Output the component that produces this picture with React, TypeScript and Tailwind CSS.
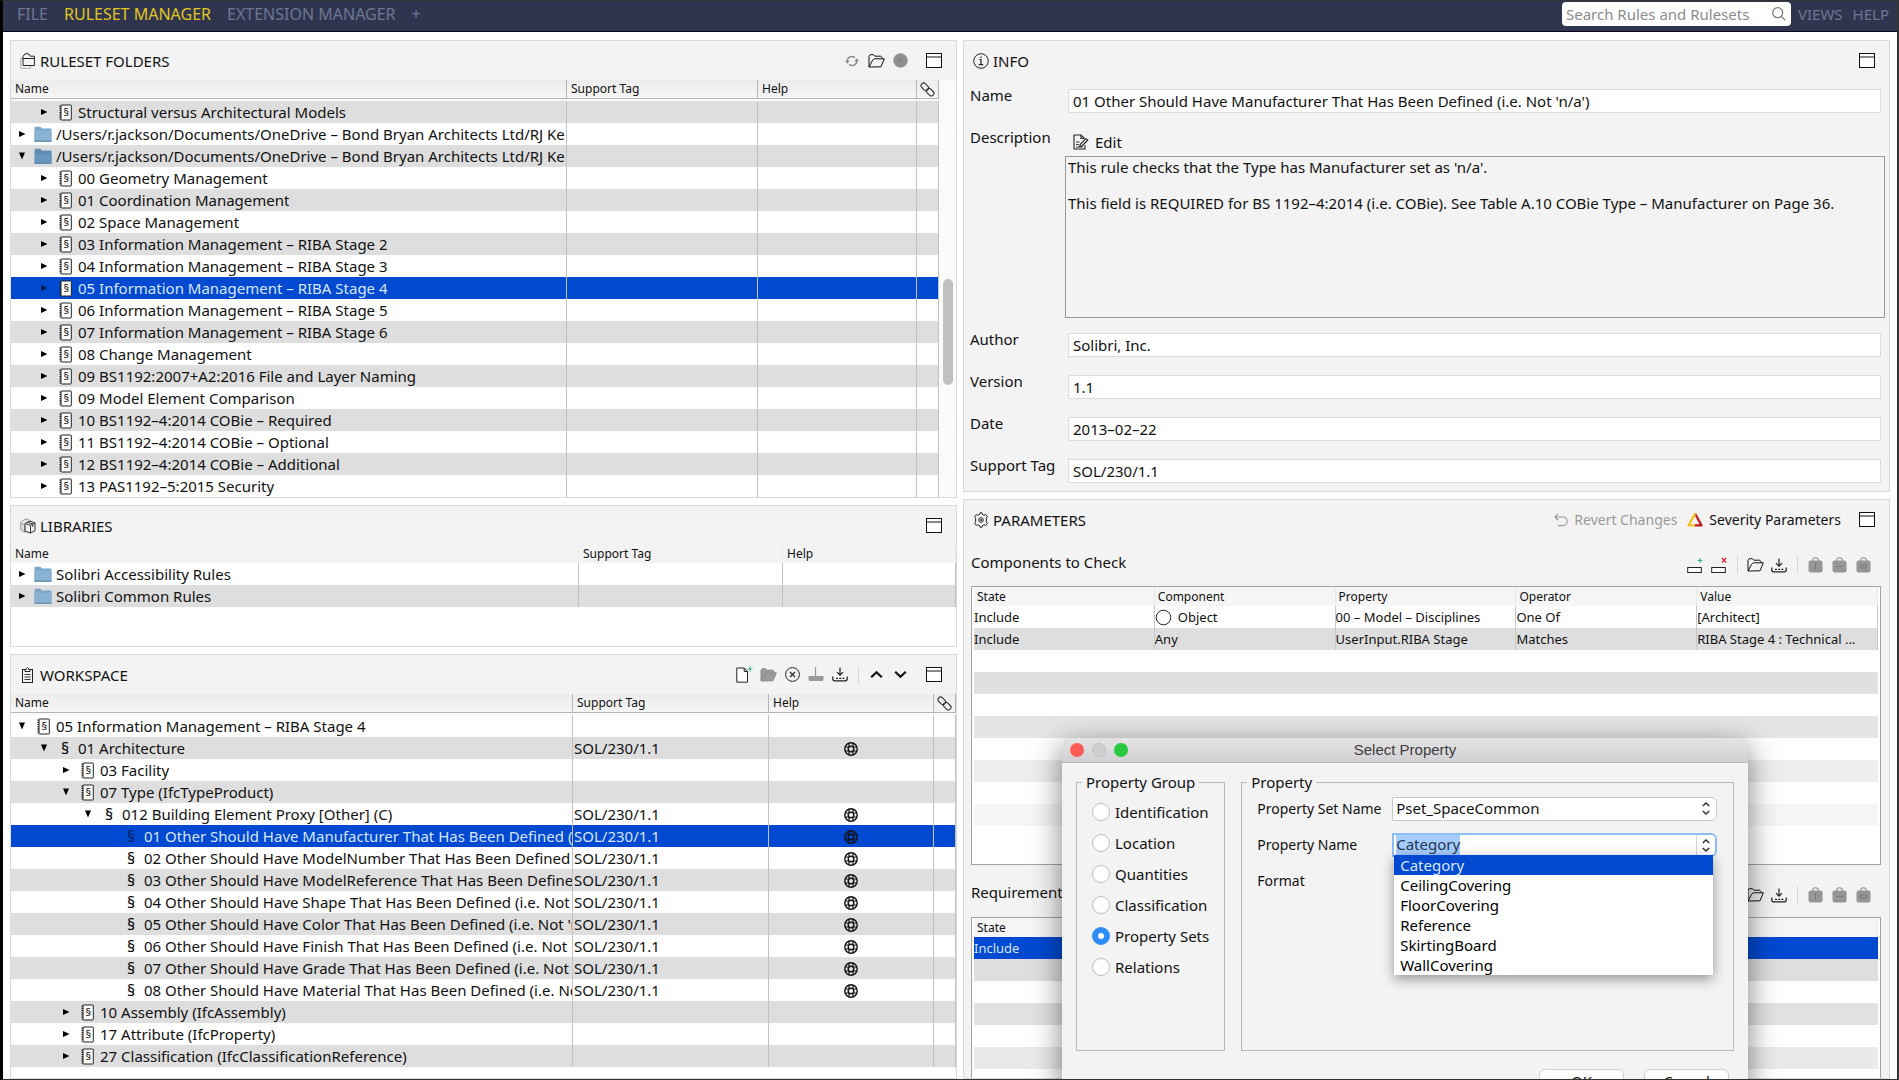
import { useEffect, useRef, useState } from "react";
import type { ReactNode } from "react";

type TreeRow = {
  level: number;
  label: string;
  icon: "ruleset" | "rule" | "folder" | "folderOpen";
  open?: boolean;
  tag?: string;
  selected?: boolean;
};

const USER_PATH = "/Users/r.jackson/Documents/OneDrive – Bond Bryan Architects Ltd/RJ Ke";

const folderRows: TreeRow[] = [
  { level: 1, label: "Structural versus Architectural Models", icon: "ruleset", open: false },
  { level: 0, label: USER_PATH, icon: "folder", open: false },
  { level: 0, label: USER_PATH, icon: "folderOpen", open: true },
  { level: 1, label: "00 Geometry Management", icon: "ruleset", open: false },
  { level: 1, label: "01 Coordination Management", icon: "ruleset", open: false },
  { level: 1, label: "02 Space Management", icon: "ruleset", open: false },
  { level: 1, label: "03 Information Management – RIBA Stage 2", icon: "ruleset", open: false },
  { level: 1, label: "04 Information Management – RIBA Stage 3", icon: "ruleset", open: false },
  { level: 1, label: "05 Information Management – RIBA Stage 4", icon: "ruleset", open: false, selected: true },
  { level: 1, label: "06 Information Management – RIBA Stage 5", icon: "ruleset", open: false },
  { level: 1, label: "07 Information Management – RIBA Stage 6", icon: "ruleset", open: false },
  { level: 1, label: "08 Change Management", icon: "ruleset", open: false },
  { level: 1, label: "09 BS1192:2007+A2:2016 File and Layer Naming", icon: "ruleset", open: false },
  { level: 1, label: "09 Model Element Comparison", icon: "ruleset", open: false },
  { level: 1, label: "10 BS1192–4:2014 COBie – Required", icon: "ruleset", open: false },
  { level: 1, label: "11 BS1192–4:2014 COBie – Optional", icon: "ruleset", open: false },
  { level: 1, label: "12 BS1192–4:2014 COBie – Additional", icon: "ruleset", open: false },
  { level: 1, label: "13 PAS1192–5:2015 Security", icon: "ruleset", open: false },
];

const libraryRows: TreeRow[] = [
  { level: 0, label: "Solibri Accessibility Rules", icon: "folder", open: false },
  { level: 0, label: "Solibri Common Rules", icon: "folder", open: false },
];

const TAG = "SOL/230/1.1";

const workspaceRows: TreeRow[] = [
  { level: 0, label: "05 Information Management – RIBA Stage 4", icon: "ruleset", open: true },
  { level: 1, label: "01 Architecture", icon: "rule", open: true, tag: TAG },
  { level: 2, label: "03 Facility", icon: "ruleset", open: false },
  { level: 2, label: "07 Type (IfcTypeProduct)", icon: "ruleset", open: true },
  { level: 3, label: "012 Building Element Proxy [Other] (C)", icon: "rule", open: true, tag: TAG },
  { level: 4, label: "01 Other Should Have Manufacturer That Has Been Defined (i.e", icon: "rule", tag: TAG, selected: true },
  { level: 4, label: "02 Other Should Have ModelNumber That Has Been Defined (i", icon: "rule", tag: TAG },
  { level: 4, label: "03 Other Should Have ModelReference That Has Been Defined", icon: "rule", tag: TAG },
  { level: 4, label: "04 Other Should Have Shape That Has Been Defined (i.e. Not 'n", icon: "rule", tag: TAG },
  { level: 4, label: "05 Other Should Have Color That Has Been Defined (i.e. Not 'n", icon: "rule", tag: TAG },
  { level: 4, label: "06 Other Should Have Finish That Has Been Defined (i.e. Not 'n", icon: "rule", tag: TAG },
  { level: 4, label: "07 Other Should Have Grade That Has Been Defined (i.e. Not 'n", icon: "rule", tag: TAG },
  { level: 4, label: "08 Other Should Have Material That Has Been Defined (i.e. Not", icon: "rule", tag: TAG },
  { level: 2, label: "10 Assembly (IfcAssembly)", icon: "ruleset", open: false },
  { level: 2, label: "17 Attribute (IfcProperty)", icon: "ruleset", open: false },
  { level: 2, label: "27 Classification (IfcClassificationReference)", icon: "ruleset", open: false },
];

const indents = ["pl-0", "pl-[22px]", "pl-[44px]", "pl-[66px]", "pl-[88px]"];

const propertyGroups = ["Identification", "Location", "Quantities", "Classification", "Property Sets", "Relations"];
const propertyNames = ["Category", "CeilingCovering", "FloorCovering", "Reference", "SkirtingBoard", "WallCovering"];

/* ---------- icons ---------- */

function WindowIcon() {
  return (
    <svg width="16" height="15" viewBox="0 0 16 15" fill="#fff" stroke="#111">
      <rect x="0.5" y="0.5" width="15" height="14" />
      <path d="M0 4h16" />
    </svg>
  );
}

function FoldersIcon() {
  return (
    <svg width="15" height="16" viewBox="0 0 15 16" fill="none" stroke="#222">
      <path d="M3 5.5H.7v9.8h9.8V13" stroke="#aaa" />
      <path d="M3 12.5V3.3L5 .8h3.6l1.6 2.4h4.2v9.3z" fill="#f3f3f3" />
      <path d="M3 5.5h11.4" />
    </svg>
  );
}

function BoxesIcon() {
  return (
    <svg width="16" height="16" viewBox="0 0 16 16" fill="none" stroke="#333">
      <path d="M.7 4.5v7l4 2.8V7zM.7 4.5L5.5.8l4 1.5" fill="#ddd" stroke="#999" />
      <path d="M5 5.5l5-2.5 5 1.8v8L10.5 15 5 13.2z" fill="#f3f3f3" />
      <path d="M5 5.5l5.5 1.8L15 4.8M10.5 7.3V15M7.8 4.2l5 1.8v3" />
    </svg>
  );
}

function ClipboardIcon() {
  return (
    <svg width="14" height="16" viewBox="0 0 14 16" fill="none" stroke="#222">
      <rect x="1.5" y="2.5" width="10" height="13" />
      <path d="M4 2.5h1.2C5.3 0 7.7 0 7.8 2.5H9v2H4z" fill="#f3f3f3" />
      <path d="M3.5 7.5h6M3.5 10h6M3.5 12.5h6" strokeWidth="0.9" />
    </svg>
  );
}

function InfoIcon() {
  return (
    <svg width="16" height="16" viewBox="0 0 16 16" fill="none" stroke="#222">
      <circle cx="8" cy="8" r="7.3" />
      <path d="M6.3 6.5H8v5M5.8 11.6h4.4M8 3.5v1.4" strokeWidth="1.2" />
    </svg>
  );
}

function GearIcon() {
  return (
    <svg width="16" height="16" viewBox="0 0 16 16" fill="none" stroke="#222">
      <path d="M6.6 2.4L7 .8h2l.4 1.6 1.6.9 1.8-.8 1.6 2.1-1 1.6v3.6l1 1.6-1.6 2.1-1.8-.8-1.6.9L9 15.2H7l-.4-1.6-1.6-.9-1.8.8-1.6-2.1 1-1.6V6.2l-1-1.6 1.6-2.1L5 3.3z" />
      <circle cx="8" cy="8" r="2.3" />
      <circle cx="8" cy="8" r="0.6" fill="#222" />
    </svg>
  );
}

function RefreshIcon() {
  return (
    <svg width="14" height="14" viewBox="0 0 14 14" fill="none" stroke="#8a8a8a" strokeWidth="1.5">
      <path d="M2.2 8V7a4.6 4.6 0 0 1 7.6-3.4M11.8 6v1a4.6 4.6 0 0 1-7.6 3.4" />
      <path d="M0 6.8h4.6L2.3 9.8zM9.4 7.2H14L11.7 4.2z" fill="#8a8a8a" stroke="none" />
    </svg>
  );
}

function OpenFolderIcon({ dim }: { dim?: boolean }) {
  return (
    <svg width="17" height="14" viewBox="0 0 17 14" fill={dim ? "#9a9a9a" : "none"} stroke={dim ? "#8c8c8c" : "#111"} strokeLinejoin="round">
      <path d="M1 13V2.2L2.2.7h3.3l1.3 1.5h6L14 3.6v1.2" />
      <path d="M1 13L4.6 6.2 6.4 4.8h9.9L13 12.8z" />
    </svg>
  );
}

function DisabledCloseIcon() {
  return (
    <svg width="15" height="15" viewBox="0 0 15 15">
      <circle cx="7.5" cy="7.5" r="7.2" fill="#909090" />
      <path d="M5.5 5.5l4 4M9.5 5.5l-4 4" stroke="#7a7a7a" />
    </svg>
  );
}

function CloseCircleIcon() {
  return (
    <svg width="15" height="15" viewBox="0 0 15 15" fill="none" stroke="#222">
      <circle cx="7.5" cy="7.5" r="6.9" />
      <path d="M5 5l5 5M10 5l-5 5" strokeWidth="1.1" />
    </svg>
  );
}

function NewFileIcon() {
  return (
    <svg width="17" height="17" viewBox="0 0 17 17" fill="none" stroke="#222">
      <path d="M.8 2h7.4l3.3 3.5v10.7H.8z" fill="#fff" />
      <path d="M8.2 2v3.5h3.3" />
      <path d="M14 .5v5M11.5 3h5" stroke="#3fb57f" strokeWidth="1.2" />
    </svg>
  );
}

function SaveDimIcon() {
  return (
    <svg width="16" height="15" viewBox="0 0 16 15">
      <path d="M7.5 0v10" stroke="#999" strokeWidth="1.2" />
      <path d="M.5 9h15v3.5q0 1.5-1.5 1.5H2Q.5 14 .5 12.5z" fill="#999" />
    </svg>
  );
}

function SaveIcon() {
  return (
    <svg width="16" height="15" viewBox="0 0 16 15" fill="none" stroke="#222" strokeWidth="1.2">
      <path d="M8 .5v7.5M5 5.2L8 8.2l3-3M.8 9.5v3.2L2 13.8h12l1.2-1.1V9.5" />
      <path d="M4 11.3h8.5" strokeDasharray="2 1.2" />
    </svg>
  );
}

function ChevronIcon({ up }: { up?: boolean }) {
  return (
    <svg width="13" height="9" viewBox="0 0 13 9" fill="none" stroke="#111" strokeWidth="2.2">
      <path d={up ? "M1.2 7.2l5.3-5 5.3 5" : "M1.2 1.8l5.3 5 5.3-5"} />
    </svg>
  );
}

function LinkIcon() {
  return (
    <svg width="15" height="15" viewBox="0 0 15 15" fill="none" stroke="#333" strokeWidth="1.1">
      <rect x="-4.2" y="-2.6" width="8.4" height="5.2" rx="2.6" transform="translate(4.8 4.8) rotate(45)" />
      <rect x="-4.2" y="-2.6" width="8.4" height="5.2" rx="2.6" transform="translate(10.2 10.2) rotate(45)" />
    </svg>
  );
}

function BuoyIcon() {
  return (
    <svg width="14" height="14" viewBox="0 0 14 14" fill="none" stroke="#111" className="inline-block align-middle">
      <circle cx="7" cy="7" r="6.2" strokeWidth="1.4" />
      <circle cx="7" cy="7" r="2.8" strokeWidth="1.4" />
      <path d="M5 1v3.6M9 1v3.6M5 9.4V13M9 9.4V13M1 5h3.6M1 9h3.6M9.4 5H13M9.4 9H13" strokeWidth="1.2" />
    </svg>
  );
}

function AddRowIcon({ remove }: { remove?: boolean }) {
  return (
    <svg width="16" height="17" viewBox="0 0 16 17" fill="none" stroke="#222">
      <rect x="0.7" y="10.5" width="13.6" height="5" fill="#fff" />
      {remove ? (
        <path d="M11 1l4.2 4.4M15.2 1L11 5.4" stroke="#dd2b40" strokeWidth="1.4" />
      ) : (
        <path d="M13 1v5M10.5 3.5h5" stroke="#3fb57f" strokeWidth="1.2" />
      )}
    </svg>
  );
}

function BagIcon({ mark }: { mark: string }) {
  return (
    <svg width="15" height="16" viewBox="0 0 15 16" fill="none">
      <path d="M4.5 4.5Q4.5 .8 7.5 .8t3 3.7" stroke="#8d8d8d" strokeWidth="1.1" />
      <rect x="0.5" y="3.5" width="14" height="12" rx="2" fill="#969696" />
      <path d={mark} stroke="#787878" />
    </svg>
  );
}

function EditIcon() {
  return (
    <svg width="16" height="16" viewBox="0 0 16 16" fill="none" stroke="#222" strokeWidth="1.1">
      <path d="M12 11v4H1V1h7l3.5 3.5" />
      <path d="M8 1v3.5h3" />
      <path d="M14.8 6L9 12l-2.3.6.6-2.2L12.8 4.6z" fill="#f3f3f3" />
      <path d="M3 8h3.5M3 10.5h3M3 13h7" strokeWidth="0.9" />
    </svg>
  );
}

function RevertIcon() {
  return (
    <svg width="14" height="14" viewBox="0 0 14 14" fill="none" stroke="#9a9a9a" strokeWidth="1.2">
      <path d="M4 1L1 4l3 3M1 4h7.8a4.2 4.2 0 0 1 0 8.7H4" />
    </svg>
  );
}

function SeverityIcon() {
  return (
    <svg width="16" height="15" viewBox="0 0 16 15" fill="none" strokeWidth="2.2" strokeLinejoin="round">
      <path d="M8 13.4h6.5L8 1.5" stroke="#c8161d" />
      <path d="M8.4 1.5L1.5 13.4H8" stroke="#f0c419" />
    </svg>
  );
}

function FolderIcon({ open }: { open?: boolean }) {
  return (
    <svg width="18" height="16" viewBox="0 0 18 16">
      <path d="M.5 2Q.5 .8 1.6 .8h4.6L8 2.6h8.3q1.2 0 1.2 1.2v10.7q0 1-1 1h-15q-1 0-1-1z" fill={open ? "#5f8fb5" : "#7aa6c8"} />
      <path d={open ? "M1 6.5h16.5v8.8h-17z" : "M.5 4.5h17v10.8H.5z"} fill={open ? "#6797bf" : "#8ab3d3"} />
      <path d="M.5 15.2h17" stroke="#55819f" />
    </svg>
  );
}

function RulesetIcon() {
  return (
    <svg width="13" height="17" viewBox="0 0 13 17">
      <rect x="2" y="1" width="10.3" height="15" rx="0.6" fill="#fff" stroke="#222" />
      <path d="M1.3 1.5v14" stroke="#222" strokeWidth="1.6" strokeDasharray="1.2 1" />
      <text x="7.3" y="12" fontSize="11" textAnchor="middle" fill="#111">§</text>
    </svg>
  );
}

function RowIcon({ row }: { row: TreeRow }) {
  if (row.icon === "ruleset") return <RulesetIcon />;
  if (row.icon === "rule") return <span className={`text-base leading-none ${row.selected ? "text-[#10206a]" : "text-black"}`}>§</span>;
  return <FolderIcon open={row.icon === "folderOpen"} />;
}

function Arrow({ open, selected }: { open?: boolean; selected?: boolean }) {
  if (open === undefined) return null;
  return (
    <svg width="8" height="8" viewBox="0 0 8 8" fill={selected ? "#0a1a4a" : "#000"}>
      <path d={open ? "M1 .5h6L4 7.5z" : "M1 1v6l6.5-3z"} />
    </svg>
  );
}

/* ---------- building blocks ---------- */

function ToolButton({ label, children }: { label: string; children: ReactNode }) {
  return (
    <button type="button" aria-label={label} className="flex w-6 h-6 items-center justify-center">
      {children}
    </button>
  );
}

function Divider() {
  return <span className="w-px h-[18px] bg-[#d8d8d8]" />;
}

function Panel({ icon, title, tools, className, children }: { icon: ReactNode; title: string; tools?: ReactNode; className?: string; children: ReactNode }) {
  return (
    <section className={`flex flex-col min-h-0 overflow-hidden border border-[#d9d9d9] bg-[#f3f3f3] ${className ?? ""}`}>
      <header className="flex h-[39px] shrink-0 items-center pl-2 pr-2.5">
        <span className="flex w-[17px] justify-center">{icon}</span>
        <h2 className="flex-1 pl-1">{title}</h2>
        <div className="flex items-center text-sm">{tools}</div>
        <div className="pl-2.5">
          <ToolButton label={`Maximize ${title}`}>
            <WindowIcon />
          </ToolButton>
        </div>
      </header>
      {children}
    </section>
  );
}

function TreeTable({ rows, cols, link, flatHead }: { rows: TreeRow[]; cols: string[]; link?: boolean; flatHead?: boolean }) {
  const [stripe, tagCol, helpCol] = cols;
  const th = flatHead ? "h-[18px] border-r border-[#ebebeb]" : "h-[19px] border-r border-b border-[#b5b5b5] bg-linear-to-b from-[#ececec] to-[#f6f6f6]";
  const td = "border-r border-[#c2c2c2] p-0";
  return (
    <table className="w-full table-fixed border-separate border-spacing-0">
      <colgroup>
        <col />
        <col className={tagCol} />
        <col className={helpCol} />
        {link && <col className="w-[22px]" />}
      </colgroup>
      <thead>
        <tr className={flatHead ? "h-[18px]" : "h-[21px] bg-[#fafafa]"}>
          {["Name", "Support Tag", "Help"].map((name) => (
            <th key={name} scope="col" className="p-0 align-top text-left text-xs font-normal">
              <div className={`flex items-center pl-1 ${th}`}>{name}</div>
            </th>
          ))}
          {link && (
            <th scope="col" aria-label="Links" className="p-0 align-top">
              <div className={`flex items-center justify-center ${th}`}>
                <LinkIcon />
              </div>
            </th>
          )}
        </tr>
      </thead>
      <tbody>
        {rows.map((row, i) => {
          const grey = stripe === "grey" ? i % 2 === 0 : i % 2 === 1;
          const bg = row.selected ? "bg-[#0049d0] text-[#d7e6ff]" : grey ? "bg-[#dedede]" : "bg-white";
          return (
            <tr key={i} className={`h-[22px] ${bg}`}>
              <td className={td}>
                <div className={`flex h-[22px] items-center overflow-hidden whitespace-nowrap ${indents[row.level]}`}>
                  <span className="flex w-[22px] shrink-0 justify-center"><Arrow open={row.open} selected={row.selected} /></span>
                  <span className="flex w-5 shrink-0 justify-center"><RowIcon row={row} /></span>
                  <span className="min-w-0 overflow-hidden pl-[3px] leading-[22px]">{row.label}</span>
                </div>
              </td>
              <td className={td}>{row.tag && <span className="pl-px">{row.tag}</span>}</td>
              <td className={`text-center leading-none ${td}`}>{row.tag && <BuoyIcon />}</td>
              {link && <td className={td} />}
            </tr>
          );
        })}
      </tbody>
    </table>
  );
}

function Field({ id, label, value }: { id: string; label: string; value: string }) {
  return (
    <div className="flex h-[42px]">
      <label htmlFor={id} className="w-[98px] shrink-0">{label}</label>
      <input id={id} defaultValue={value} className="mt-[3px] h-6 min-w-0 flex-1 border border-[#dcdcdc] bg-white px-1 outline-none" />
    </div>
  );
}

function ConditionTools() {
  return (
    <div className="flex items-center self-start">
      <ToolButton label="Add row"><AddRowIcon /></ToolButton>
      <ToolButton label="Remove row"><AddRowIcon remove /></ToolButton>
      <span className="flex w-3 justify-center"><Divider /></span>
      <ToolButton label="Open"><OpenFolderIcon /></ToolButton>
      <ToolButton label="Save"><SaveIcon /></ToolButton>
      <span className="flex w-3 justify-center"><Divider /></span>
      <ToolButton label="Set bag"><BagIcon mark="M7.5 6v7" /></ToolButton>
      <ToolButton label="Add to bag"><BagIcon mark="M4.5 9.5h6" /></ToolButton>
      <ToolButton label="Remove from bag"><BagIcon mark="M4.5 8h6v3h-6z" /></ToolButton>
    </div>
  );
}

function ConditionTable({ rows, fillers, selected }: { rows: ReactNode[][]; fillers: string[]; selected?: boolean }) {
  return (
    <div className="border border-[#a3a3a3] bg-white px-0.5 pb-4">
      <table className="w-full table-fixed border-separate border-spacing-0">
        <thead>
          <tr className="h-[19px] bg-[#f5f5f5]">
            {["State", "Component", "Property", "Operator", "Value"].map((name) => (
              <th key={name} scope="col" className="border-r border-[#e8e8e8] p-0 pl-[3px] text-left text-xs leading-[18px] font-normal">{name}</th>
            ))}
          </tr>
        </thead>
        <tbody>
          {rows.map((cells, i) => (
            <tr key={i} className={`h-[22px] ${selected ? "bg-[#0049d0] text-[#d7e6ff]" : i % 2 ? "bg-[#dedede]" : "bg-white"}`}>
              {cells.map((cell, j) => (
                <td key={j} className={`truncate p-0 text-[13px] leading-[22px] ${selected ? "" : "border-r border-[#c8c8c8]"}`}>{cell}</td>
              ))}
            </tr>
          ))}
          {fillers.map((bg, i) => (
            <tr key={i} className={`h-[22px] ${bg}`}>
              <td colSpan={5} className="p-0" />
            </tr>
          ))}
        </tbody>
      </table>
    </div>
  );
}

function StepperArrows() {
  return (
    <svg width="8" height="13" viewBox="0 0 8 13" fill="none" stroke="#333" strokeWidth="1.5">
      <path d="M.8 4L4 1l3.2 3M.8 9L4 12l3.2-3" />
    </svg>
  );
}

function SelectPropertyDialog() {
  const [group, setGroup] = useState("Property Sets");
  const nameRef = useRef<HTMLInputElement>(null);

  useEffect(() => {
    nameRef.current?.focus({ preventScroll: true });
    nameRef.current?.select();
  }, []);

  return (
    <div role="dialog" aria-labelledby="dialog-title" className="absolute top-[737px] left-[1059px] w-[686px] rounded-t-md bg-[#f3f3f3] shadow-[0_8px_30px_rgba(0,0,0,0.5)]">
      <div className="flex h-[25px] items-center rounded-t-md border-b border-[#b9b7b9] bg-linear-to-b from-[#e6e3e6] to-[#d3d0d3] px-2">
        <div className="flex w-16 gap-2">
          <button type="button" aria-label="Close" className="size-3.5 rounded-full bg-[#fb5b57]" />
          <button type="button" aria-label="Minimize" disabled className="size-3.5 rounded-full border border-[#c4c1c4] bg-[#d0cdd0]" />
          <button type="button" aria-label="Zoom" className="size-3.5 rounded-full bg-[#28c840]" />
        </div>
        <h2 id="dialog-title" className="flex-1 pr-16 text-center font-['Liberation_Sans',sans-serif] text-[15px] text-[#3d3d3d]">Select Property</h2>
      </div>

      <div className="flex gap-4 px-3.5 pt-2.5">
        <fieldset className="h-[278px] w-[147px] border border-[#b9b9b9] px-[15px]">
          <legend className="-ml-2.5 px-1">Property Group</legend>
          <div className="flex flex-col pt-[5px]">
            {propertyGroups.map((name) => (
              <label key={name} className="flex h-[31px] items-center gap-[5px] whitespace-nowrap">
                <input
                  type="radio"
                  name="property-group"
                  checked={group === name}
                  onChange={() => setGroup(name)}
                  className="size-[18px] shrink-0 appearance-none rounded-full border border-[#bdbdbd] bg-white checked:border-[6px] checked:border-[#2f8dfa]"
                />
                {name}
              </label>
            ))}
          </div>
        </fieldset>

        <fieldset className="h-[278px] min-w-0 flex-1 border border-[#b9b9b9] pr-4 pl-[15px]">
          <legend className="-ml-2.5 px-1">Property</legend>
          <div className="flex h-9 items-center text-sm">
            <label htmlFor="pset" className="w-[135px] shrink-0">Property Set Name</label>
            <div className="relative flex-1">
              <select id="pset" className="h-6 w-full appearance-none rounded-r-md border border-[#c9c9c9] bg-white pl-[3px] text-[15px] outline-none">
                <option>Pset_SpaceCommon</option>
              </select>
              <span className="pointer-events-none absolute top-[5px] right-[7px]"><StepperArrows /></span>
            </div>
          </div>
          <div className="flex h-9 items-center text-sm">
            <label htmlFor="pname" className="w-[135px] shrink-0">Property Name</label>
            <div className="relative flex h-6 flex-1 items-center rounded-r-md border-2 border-[#8dbdf3] bg-white text-[15px]">
              <input
                id="pname"
                ref={nameRef}
                defaultValue="Category"
                className="h-5 min-w-0 flex-1 bg-transparent pl-0.5 outline-none selection:bg-[#a5cdff] selection:text-[#26364f]"
              />
              <button type="button" aria-label="Show property names" className="flex h-5 w-[19px] items-center justify-center border-l border-[#d5d5d5]">
                <StepperArrows />
              </button>
              <ul role="listbox" aria-label="Property names" className="absolute top-5 right-0.5 left-0 z-10 bg-white shadow-[0_4px_12px_rgba(0,0,0,0.4)]">
                {propertyNames.map((name, i) => (
                  <li key={name} role="option" aria-selected={i === 0} className={`h-5 pl-1.5 leading-5 ${i === 0 ? "bg-[#0049d0] text-[#d7e6ff]" : "text-black"}`}>
                    {name}
                  </li>
                ))}
              </ul>
            </div>
          </div>
          <div className="flex h-9 items-center text-sm">
            <span className="w-[135px] shrink-0">Format</span>
          </div>
        </fieldset>
      </div>

      <div className="flex justify-end gap-5 pt-[18px] pr-[19px]">
        <button type="button" className="h-6 w-[85px] rounded-md border border-[#cfcfcf] bg-white">OK</button>
        <button type="button" className="h-6 w-[85px] rounded-md border border-[#cfcfcf] bg-white">Cancel</button>
      </div>
    </div>
  );
}

/* ---------- page ---------- */

export default function App() {
  return (
    <div className="relative flex h-screen flex-col overflow-hidden border-t border-r-2 border-b border-l-[3px] border-t-[#333] border-r-[#333] border-b-[#333] border-l-black bg-white font-['Noto_Sans',sans-serif] text-[15px] leading-[18px] text-[#111]">
      <nav className="flex h-[31px] shrink-0 items-center border-b border-[#06061f] bg-[#30354f] pb-1 pl-3.5 pr-2 text-[#6b7793]">
        <div className="flex items-center gap-4 text-base leading-[18px]">
          <button type="button">FILE</button>
          <button type="button" className="text-[#e0c71f]">RULESET MANAGER</button>
          <button type="button">EXTENSION MANAGER</button>
          <button type="button" aria-label="Add tab">+</button>
        </div>
        <label className="mr-[7px] ml-auto flex h-6 w-[229px] items-center rounded bg-white px-1">
          <input type="search" aria-label="Search" placeholder="Search Rules and Rulesets" className="min-w-0 flex-1 bg-transparent outline-none placeholder:text-[#8b8b8b]" />
          <svg width="16" height="16" viewBox="0 0 16 16" fill="none" stroke="#777" strokeWidth="1.2">
            <circle cx="6.7" cy="6.7" r="5" />
            <path d="M10.3 10.3l4 4" />
          </svg>
        </label>
        <button type="button">VIEWS</button>
        <button type="button" className="ml-2.5">HELP</button>
      </nav>

      <main className="grid min-h-0 flex-1 grid-cols-[947fr_927fr] gap-1.5 px-[7px] pt-2">
        <div className="flex min-h-0 flex-col gap-[7px]">
          <Panel
            icon={<FoldersIcon />}
            title="RULESET FOLDERS"
            className="shrink-0"
            tools={
              <>
                <ToolButton label="Refresh"><RefreshIcon /></ToolButton>
                <ToolButton label="Open folder"><OpenFolderIcon /></ToolButton>
                <ToolButton label="Close folder"><DisabledCloseIcon /></ToolButton>
              </>
            }
          >
            <div className="flex bg-[#fafafa]">
              <div className="min-w-0 flex-1">
                <TreeTable rows={folderRows} cols={["grey", "w-[191px]", "w-[159px]"]} link />
              </div>
              <div className="flex w-[17px] justify-center pt-[199px]">
                <div className="h-[106px] w-[10px] rounded-full bg-[#c1c1c1]" />
              </div>
            </div>
          </Panel>

          <Panel icon={<BoxesIcon />} title="LIBRARIES" className="h-[142px] shrink-0">
            <TreeTable rows={libraryRows} cols={["white", "w-[204px]", "w-[173px]"]} flatHead />
            <div className="flex-1 bg-white" />
          </Panel>

          <Panel
            icon={<ClipboardIcon />}
            title="WORKSPACE"
            className="flex-1"
            tools={
              <>
                <ToolButton label="New"><NewFileIcon /></ToolButton>
                <ToolButton label="Open"><OpenFolderIcon dim /></ToolButton>
                <ToolButton label="Close"><CloseCircleIcon /></ToolButton>
                <ToolButton label="Save"><SaveDimIcon /></ToolButton>
                <ToolButton label="Save as"><SaveIcon /></ToolButton>
                <span className="flex w-3 justify-center"><Divider /></span>
                <ToolButton label="Move up"><ChevronIcon up /></ToolButton>
                <ToolButton label="Move down"><ChevronIcon /></ToolButton>
              </>
            }
          >
            <TreeTable rows={workspaceRows} cols={["white", "w-[196px]", "w-[165px]"]} link />
            <div className="flex-1 bg-white" />
          </Panel>
        </div>

        <div className="flex min-h-0 flex-col gap-[7px]">
          <Panel icon={<InfoIcon />} title="INFO" className="h-[452px] shrink-0">
            <div className="flex flex-col pt-1.5 pr-2 pl-1.5">
              <Field id="rule-name" label="Name" value="01 Other Should Have Manufacturer That Has Been Defined (i.e. Not 'n/a')" />
              <div className="flex h-[202px]">
                <label htmlFor="rule-description" className="w-[95px] shrink-0">Description</label>
                <div className="-mr-1 flex min-w-0 flex-1 flex-col">
                  <button type="button" className="flex h-7 items-center gap-1.5 self-start pl-2">
                    <EditIcon />
                    Edit
                  </button>
                  <textarea
                    id="rule-description"
                    readOnly
                    defaultValue={"This rule checks that the Type has Manufacturer set as 'n/a'.\n\nThis field is REQUIRED for BS 1192–4:2014 (i.e. COBie). See Table A.10 COBie Type – Manufacturer on Page 36."}
                    className="h-[162px] w-full resize-none border border-[#999] bg-transparent px-0.5 py-px outline-none"
                  />
                </div>
              </div>
              <Field id="rule-author" label="Author" value="Solibri, Inc." />
              <Field id="rule-version" label="Version" value="1.1" />
              <Field id="rule-date" label="Date" value="2013–02–22" />
              <Field id="rule-tag" label="Support Tag" value="SOL/230/1.1" />
            </div>
          </Panel>

          <Panel
            icon={<GearIcon />}
            title="PARAMETERS"
            className="flex-1"
            tools={
              <>
                <button type="button" disabled className="flex items-center gap-1.5 text-[#9a9a9a]">
                  <RevertIcon />
                  Revert Changes
                </button>
                <button type="button" className="mr-1 ml-2.5 flex items-center gap-1.5">
                  <SeverityIcon />
                  Severity Parameters
                </button>
              </>
            }
          >
            <div className="flex flex-col pr-2 pl-[7px]">
              <div className="flex h-[47px] justify-between pt-3.5 pr-1.5">
                <h3>Components to Check</h3>
                <ConditionTools />
              </div>
              <ConditionTable
                rows={[
                  [
                    "Include",
                    <span key="object" className="flex items-center gap-1.5">
                      <svg width="17" height="17" viewBox="0 0 17 17" fill="#fff" stroke="#222"><circle cx="8.5" cy="8.5" r="7.3" /></svg>
                      Object
                    </span>,
                    "00 – Model – Disciplines",
                    "One Of",
                    "[Architect]",
                  ],
                  ["Include", "Any", "UserInput.RIBA Stage", "Matches", "RIBA Stage 4 : Technical ..."],
                ]}
                fillers={["bg-white", "bg-[#e0e0e0]", "bg-white", "bg-[#e5e5e5]", "bg-white", "bg-[#eee]", "bg-white", "bg-[#f6f6f6]", "bg-white"]}
              />
              <div className="flex h-[52px] justify-between pt-[18px] pr-1.5">
                <h3>Requirements</h3>
                <ConditionTools />
              </div>
              <ConditionTable
                selected
                rows={[["Include", "", "", "", ""]]}
                fillers={["bg-[#dedede]", "bg-white", "bg-[#e2e2e2]", "bg-white", "bg-[#eaeaea]", "bg-white", "bg-white"]}
              />
            </div>
          </Panel>
        </div>
      </main>

      <SelectPropertyDialog />
    </div>
  );
}
